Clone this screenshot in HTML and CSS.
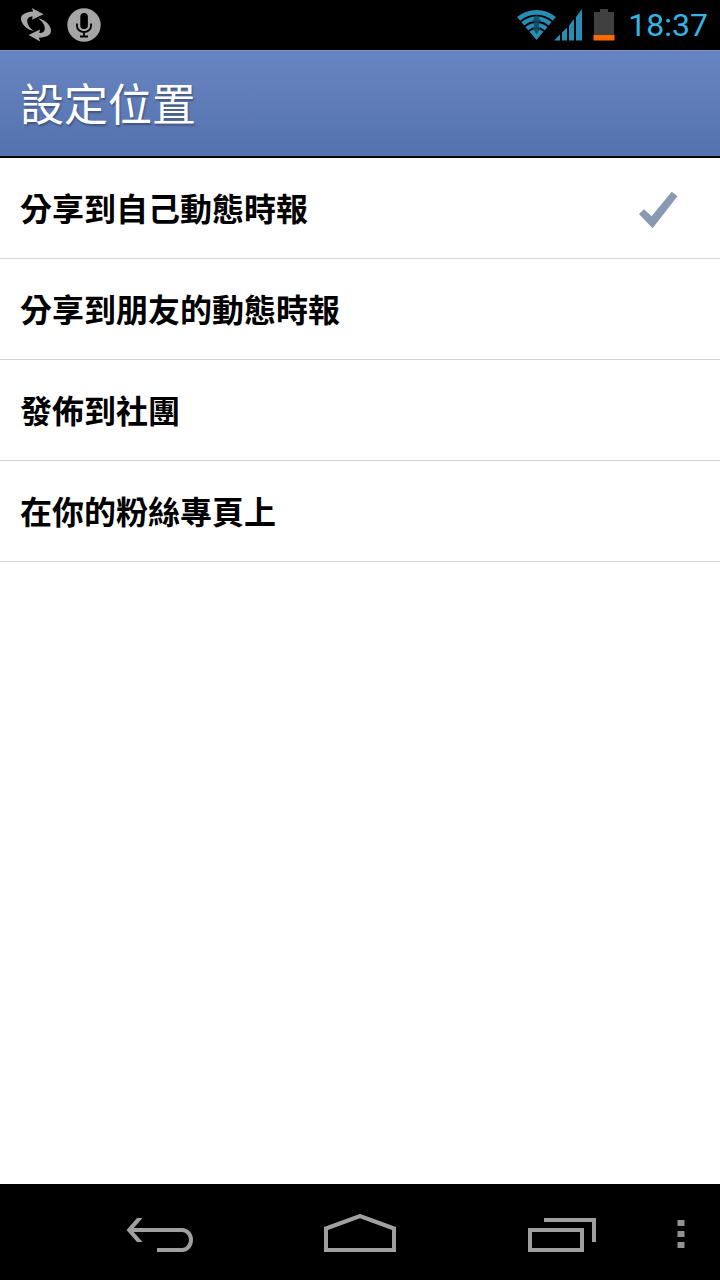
FILE: index.html
```html
<!DOCTYPE html>
<html lang="zh-Hant">
<head>
<meta charset="utf-8">
<meta name="viewport" content="width=device-width, initial-scale=1">
<title>設定位置</title>
<link rel="stylesheet" href="styles.css">
</head>
<body>
<div class="screen">
  <div class="status-bar">
    <div class="status-group status-left">
      <svg class="icon" width="32" height="36" viewBox="20 7 32 36" aria-hidden="true">
        <g fill="#a6a6a6">
          <path id="sync-arrow" d="M34 31.2C26 29.5 21 23.5 21 18.5C21 14.5 25.5 12.3 33.2 11.6L31.8 8L43.5 14.3L32 19.8L32.7 16.5C29 16.5 27 18.5 27.2 21.5C27.5 25 30 28.5 34 31.2Z"/>
          <use href="#sync-arrow" transform="rotate(180 36 24.7)"/>
        </g>
      </svg>
      <svg class="icon" width="34" height="34" viewBox="67 8 34 34" aria-hidden="true">
        <circle cx="84" cy="25" r="16.7" fill="#a6a6a6"/>
        <rect x="80.3" y="13" width="7.6" height="16" rx="3.8" fill="#000"/>
        <path d="M77 23.5V26a7 6 0 0 0 14 0V23.5M84 32v4.5M80 36.5h8" fill="none" stroke="#000" stroke-width="1.8"/>
      </svg>
    </div>
    <div class="status-group status-right">
      <svg class="icon" width="66" height="32" viewBox="517 9 66 32" aria-hidden="true">
        <g fill="none" stroke="#288db4">
          <path d="M518.6 18.9A27.7 27.7 0 0 1 554.4 18.9" stroke-width="4.8"/>
          <path d="M522.8 23.8A21.2 21.2 0 0 1 550.2 23.8" stroke-width="4.6"/>
          <path d="M526.8 28.6A15 15 0 0 1 546.2 28.6" stroke-width="4.2"/>
        </g>
        <path d="M536.5 40L529.4 31.6A11 11 0 0 1 543.6 31.6Z" fill="#288db4"/>
        <path d="M536.5 14L541 21.5H539V25H534V21.5H532ZM536.5 34.5L532 27H534V25H539V27H541Z" fill="#104a60" opacity=".85"/>
        <path d="M554 40.5L560 34.5V40.5ZM562 40.5V32.5L567 27.5V40.5ZM569 40.5V25.5L574 19V40.5ZM576 40.5V17L582 9V40.5Z" fill="#288db4"/>
      </svg>
      <svg class="icon" width="22" height="32" viewBox="593 9 22 32" aria-hidden="true">
        <path d="M594 12H600V9H608V12H614V35H594Z" fill="#404040"/>
        <path d="M593.5 35H614.5V40.5H593.5Z" fill="#ff6a00"/>
      </svg>
      <time class="clock">18:37</time>
    </div>
  </div>

  <header class="title-bar">
    <h1 class="title">設定位置</h1>
  </header>

  <main class="options">
    <label class="option">
      <span class="option-text">分享到自己動態時報</span>
      <input class="option-input" type="radio" name="audience" checked>
      <svg class="check" width="40" height="38" viewBox="638 191 40 38" aria-hidden="true">
        <path d="M639 214L643.9 209.2L651.6 216.3L671.7 191.7L677.5 196.3L652.6 228.2Z" fill="#8899b1"/>
      </svg>
    </label>
    <label class="option">
      <span class="option-text">分享到朋友的動態時報</span>
      <input class="option-input" type="radio" name="audience">
    </label>
    <label class="option">
      <span class="option-text">發佈到社團</span>
      <input class="option-input" type="radio" name="audience">
    </label>
    <label class="option">
      <span class="option-text">在你的粉絲專頁上</span>
      <input class="option-input" type="radio" name="audience">
    </label>
  </main>

  <nav class="nav-bar">
    <button class="nav-button" type="button" aria-label="返回">
      <svg class="icon" width="72" height="40" viewBox="123 1214 72 40" fill="none" stroke="#a0a0a0" stroke-width="4">
        <path d="M129 1230H182A9 10 0 0 1 182 1250H157"/>
        <path d="M137 1218H142.5L132 1230L142.5 1242H137L126.5 1230Z" fill="#a0a0a0" stroke="none"/>
      </svg>
    </button>
    <button class="nav-button" type="button" aria-label="主畫面">
      <svg class="icon" width="72" height="40" viewBox="324 1214 72 40" fill="none" stroke="#a0a0a0" stroke-width="4">
        <path d="M326 1250V1228.5L360 1216L394 1228.5V1250Z"/>
      </svg>
    </button>
    <button class="nav-button" type="button" aria-label="最近使用的應用程式">
      <svg class="icon" width="72" height="40" viewBox="525 1214 72 40" fill="none" stroke="#a0a0a0" stroke-width="4">
        <path d="M530 1230H582V1250H530ZM544 1220H594V1242"/>
      </svg>
    </button>
    <button class="nav-menu" type="button" aria-label="選單">
      <svg class="icon" width="8" height="40" viewBox="677 1214 8 40" fill="#929292">
        <path d="M677.5 1220h7v6h-7zM677.5 1231h7v6h-7zM677.5 1242h7v6h-7z"/>
      </svg>
    </button>
  </nav>
</div>
</body>
</html>
```
FILE: styles.css
```css
* {
  box-sizing: border-box;
}

body {
  margin: 0;
  background: #fff;
  color: #000;
  font-family: "Noto Sans CJK TC", sans-serif;
}

.screen {
  display: flex;
  flex-direction: column;
  min-height: 100vh;
}

.icon {
  display: block;
}

.status-bar {
  display: flex;
  align-items: center;
  justify-content: space-between;
  height: 50px;
  padding: 0 12px 0 20px;
  background: #000;
}

.status-group {
  display: flex;
  align-items: center;
}

.status-left {
  gap: 15px;
}

.status-right {
  gap: 10px;
}

.clock {
  margin-left: 3px;
  color: #33b5e5;
  font-family: Roboto, sans-serif;
  font-size: 32px;
  line-height: 48px;
}

.title-bar {
  display: flex;
  align-items: center;
  height: 108px;
  padding: 0 20px 4px;
  border-top: 1px solid #8496c4;
  border-bottom: 2px solid #000;
  background: linear-gradient(#6885c1, #5472ad);
}

.title {
  margin: 0;
  color: #fff;
  font-size: 44px;
  font-weight: 400;
  line-height: 64px;
  text-shadow: 1px 2px 2px rgba(0, 0, 0, 0.3);
}

.options {
  flex: 1;
}

.option {
  display: flex;
  align-items: center;
  min-height: 101px;
  padding: 0 42px 0 20px;
  border-bottom: 1px solid #d5d5d5;
  cursor: pointer;
}

.option-text {
  flex: 1;
  padding-bottom: 2px;
  font-size: 32px;
  font-weight: 700;
  line-height: 48px;
}

.option-input {
  width: 0;
  height: 0;
  margin: 0;
  appearance: none;
}

.check {
  display: none;
  margin-top: 4px;
}

.option-input:checked + .check {
  display: block;
}

.nav-bar {
  display: flex;
  height: 96px;
  padding-left: 58px;
  background: #000;
}

.nav-button,
.nav-menu {
  display: flex;
  align-items: center;
  justify-content: center;
  padding: 4px 0 0;
  border: 0;
  background: transparent;
}

.nav-button {
  flex: 1;
}

.nav-menu {
  width: 58px;
  padding-right: 20px;
}
```
